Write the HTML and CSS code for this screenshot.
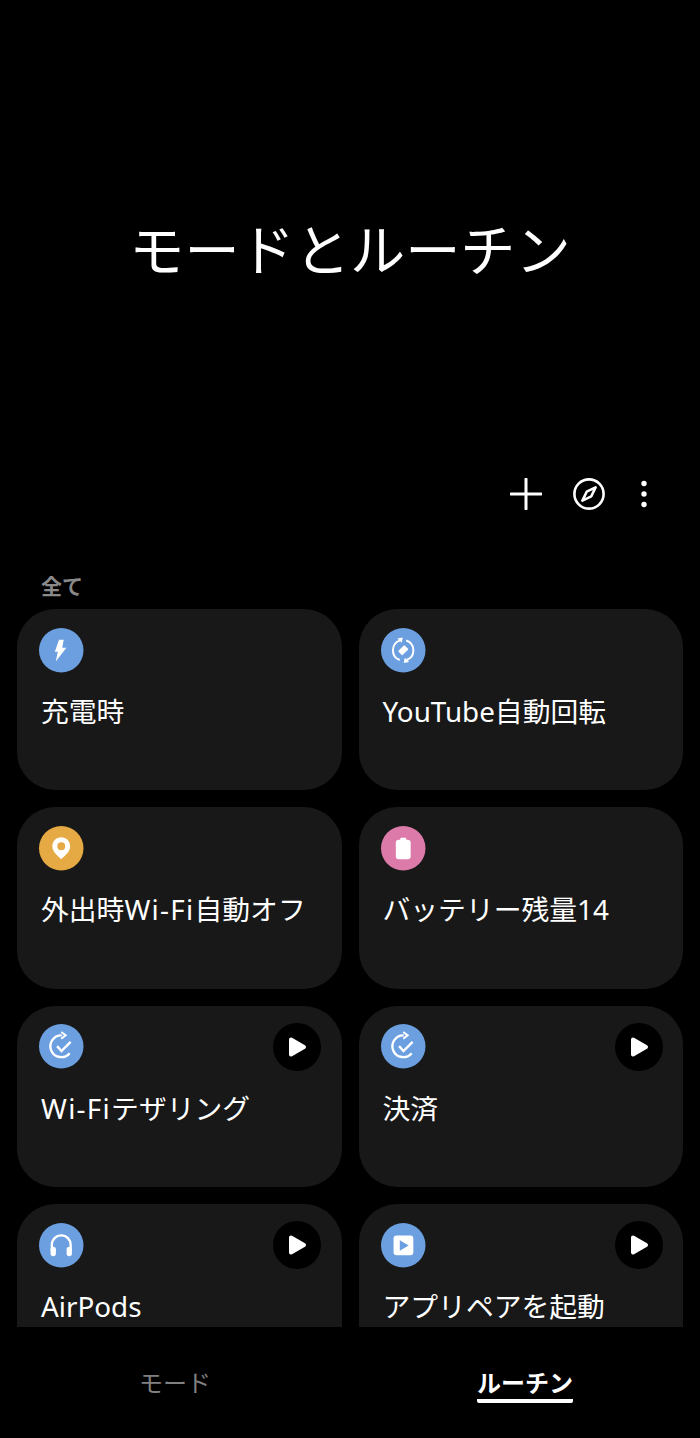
FILE: index.html
```html
<!DOCTYPE html>
<html lang="ja">
<head>
  <meta charset="UTF-8" />
  <meta name="viewport" content="width=device-width, initial-scale=1.0">
  <title>モードとルーチン</title>

  <link rel="stylesheet" href="styles.css">
</head>

<body>

  <div class="page">
    <div class="hero">
      <h1>モードとルーチン</h1>
    </div>

    <div class="toolbar">
      <svg class="tool" viewBox="0 0 32 32"><path d="M16 1v30M1 16h30" stroke="#fff" stroke-width="3" stroke-linecap="round" fill="none"/></svg>
      <svg class="tool" viewBox="0 0 32 32"><circle cx="16" cy="16" r="14.6" stroke="#fff" stroke-width="2.6" fill="none"/><path d="M22.6 9.4L18.3 18.3 9.4 22.6 13.7 13.7z" stroke="#fff" stroke-width="2.6" stroke-linejoin="round" fill="none"/></svg>
      <svg class="tool" viewBox="0 0 32 32"><circle cx="16" cy="5.5" r="2.7" fill="#fff"/><circle cx="16" cy="16" r="2.7" fill="#fff"/><circle cx="16" cy="26.5" r="2.7" fill="#fff"/></svg>
    </div>

    <div class="section-label">全て</div>

    <div class="list">
      <div class="grid">

        <div class="card">
          <div class="card-top">
            <svg class="icon" viewBox="0 0 45 45"><circle cx="22.5" cy="22.5" r="22.5" fill="#6b9fe0"/><path d="M20.3 12H25L23.5 20H27.7L17 34 19 24H16z" fill="#fff"/></svg>
          </div>
          <div class="card-title">充電時</div>
        </div>

        <div class="card">
          <div class="card-top">
            <svg class="icon" viewBox="0 0 45 45"><circle cx="22.5" cy="22.5" r="22.5" fill="#6b9fe0"/><path d="M19.5 12.5A10.5 10.5 0 0 0 19 32.4M25.5 12.6A10.5 10.5 0 0 1 26 32.4" stroke="#fff" stroke-width="2" fill="none"/><path d="M16.5 10.5L22 9.5 21 15zM28.5 34.5L23 35.5 24 30z" fill="#fff"/><rect x="18" y="19.5" width="9" height="6" rx="1" fill="#fff" transform="rotate(-45 22.5 22.5)"/></svg>
          </div>
          <div class="card-title">YouTube自動回転</div>
        </div>

        <div class="card">
          <div class="card-top">
            <svg class="icon" viewBox="0 0 45 45"><circle cx="22.5" cy="22.5" r="22.5" fill="#e5aa44"/><path fill-rule="evenodd" d="M22.5 11.5c-5 0-9 4-9 9 0 6 6 10 9 13 3-3 9-7 9-13 0-5-4-9-9-9zm0 5a4 4 0 1 1 0 8 4 4 0 0 1 0-8z" fill="#fff"/></svg>
          </div>
          <div class="card-title">外出時<span class="wifi">Wi-Fi</span>自動オフ</div>
        </div>

        <div class="card">
          <div class="card-top">
            <svg class="icon" viewBox="0 0 45 45"><circle cx="22.5" cy="22.5" r="22.5" fill="#dc7baa"/><rect x="15" y="14" width="15" height="19.5" rx="3" fill="#fff"/><rect x="19.5" y="12" width="6" height="4" rx="1" fill="#fff"/></svg>
          </div>
          <div class="card-title">バッテリー残量14</div>
        </div>

        <div class="card">
          <div class="card-top">
            <svg class="icon" viewBox="0 0 45 45"><circle cx="22.5" cy="22.5" r="22.5" fill="#6b9fe0"/><path d="M23 11.5A11 11 0 1 0 31 29.5" stroke="#fff" stroke-width="2.4" fill="none"/><path d="M22.5 8l4.5 3.5-4.5 3.5" stroke="#fff" stroke-width="2" fill="none"/><path d="M18.3 22.4l4.4 5L32 18" stroke="#fff" stroke-width="2.4" fill="none"/></svg>
            <div class="play-btn"><svg viewBox="0 0 48 48"><path d="M18 16.5L31 24 18 31.5z" fill="#fff" stroke="#fff" stroke-width="4" stroke-linejoin="round"/></svg></div>
          </div>
          <div class="card-title"><span class="wifi">Wi-Fi</span>テザリング</div>
        </div>

        <div class="card">
          <div class="card-top">
            <svg class="icon" viewBox="0 0 45 45"><circle cx="22.5" cy="22.5" r="22.5" fill="#6b9fe0"/><path d="M23 11.5A11 11 0 1 0 31 29.5" stroke="#fff" stroke-width="2.4" fill="none"/><path d="M22.5 8l4.5 3.5-4.5 3.5" stroke="#fff" stroke-width="2" fill="none"/><path d="M18.3 22.4l4.4 5L32 18" stroke="#fff" stroke-width="2.4" fill="none"/></svg>
            <div class="play-btn"><svg viewBox="0 0 48 48"><path d="M18 16.5L31 24 18 31.5z" fill="#fff" stroke="#fff" stroke-width="4" stroke-linejoin="round"/></svg></div>
          </div>
          <div class="card-title">決済</div>
        </div>

        <div class="card">
          <div class="card-top">
            <svg class="icon" viewBox="0 0 45 45"><circle cx="22.5" cy="22.5" r="22.5" fill="#6b9fe0"/><path d="M13 28v-6a9.5 9.5 0 0 1 19 0v6" stroke="#fff" stroke-width="2.4" fill="none"/><rect x="11.7" y="24" width="5.4" height="9.5" rx="2.7" fill="#fff"/><rect x="27.9" y="24" width="5.4" height="9.5" rx="2.7" fill="#fff"/></svg>
            <div class="play-btn"><svg viewBox="0 0 48 48"><path d="M18 16.5L31 24 18 31.5z" fill="#fff" stroke="#fff" stroke-width="4" stroke-linejoin="round"/></svg></div>
          </div>
          <div class="card-title">AirPods</div>
        </div>

        <div class="card">
          <div class="card-top">
            <svg class="icon" viewBox="0 0 45 45"><circle cx="22.5" cy="22.5" r="22.5" fill="#6b9fe0"/><rect x="12.7" y="12.7" width="20" height="20" rx="3" fill="#fff"/><path d="M19 17.5L28 22.7 19 28z" fill="#6b9fe0"/></svg>
            <div class="play-btn"><svg viewBox="0 0 48 48"><path d="M18 16.5L31 24 18 31.5z" fill="#fff" stroke="#fff" stroke-width="4" stroke-linejoin="round"/></svg></div>
          </div>
          <div class="card-title">アプリペアを起動</div>
        </div>

      </div>
    </div>

    <div class="tabs">
      <div class="tab"><span class="tab-label">モード</span></div>
      <div class="tab active"><span class="tab-label">ルーチン</span></div>
    </div>
  </div>

</body>
</html>
```

FILE: styles.css
```css
body {
  background-color: black;
  margin: 0;
  padding: 0;
  color: white;
  font-family: "Noto Sans", "Noto Sans CJK JP", sans-serif;
}

.page {
  display: flex;
  flex-direction: column;
  height: 1438px;
  overflow: hidden;
}

.hero {
  padding: 212px 0 196px;
  text-align: center;
}

.hero h1 {
  margin: 0;
  font-family: "Noto Sans CJK JP", sans-serif;
  font-size: 55.2px;
  line-height: 70px;
  font-weight: 400;
}

.toolbar {
  display: flex;
  justify-content: flex-end;
  gap: 31px;
  padding-right: 40px;
}

.tool {
  display: block;
  width: 32px;
  height: 32px;
}

.tool:last-child {
  margin-left: -8px;
}

.section-label {
  margin: 60px 0 9px 41px;
  font-family: "Noto Sans CJK JP", sans-serif;
  font-size: 21px;
  line-height: 30px;
  font-weight: 700;
  color: #8a8a8a;
}

.list {
  flex: 1;
  min-height: 0;
  overflow: hidden;
  padding: 0 17px;
}

.grid {
  display: grid;
  grid-template-columns: 1fr 1fr;
  gap: 17px;
}

.card {
  height: 181.3px;
  padding: 17px 20.5px 0 22px;
  box-sizing: border-box;
  background-color: #181818;
  border-radius: 38px;
}

.card-top {
  display: flex;
  justify-content: space-between;
  align-items: center;
  height: 48px;
}

.icon {
  display: block;
  width: 44.5px;
  height: 44.5px;
  overflow: visible;
}

.play-btn {
  width: 48px;
  height: 48px;
  background-color: black;
  border-radius: 50%;
}

.play-btn svg {
  display: block;
  width: 48px;
  height: 48px;
}

.card-title {
  margin: 17px 0 0 2px;
  font-size: 27.8px;
  line-height: 40px;
  white-space: nowrap;
}

.wifi {
  letter-spacing: 1.3px;
}

.tabs {
  display: flex;
  height: 111px;
}

.tab {
  flex: 1;
  padding-top: 38px;
  box-sizing: border-box;
  text-align: center;
  color: #808080;
  font-family: "Noto Sans CJK JP", sans-serif;
}

.tab-label {
  display: inline-block;
  font-size: 24px;
  line-height: 34px;
}

.tab.active {
  color: white;
}

.tab.active .tab-label {
  font-weight: 700;
  border-bottom: 4px solid white;
  border-radius: 2px;
}
```
